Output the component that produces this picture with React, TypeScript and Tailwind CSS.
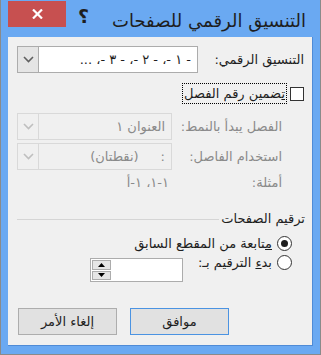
import React from "react";

const Chevron = ({ disabled }: { disabled?: boolean }) => (
  <svg width="11" height="7" viewBox="0 0 11 7">
    <polyline
      points="1,1 5.5,5.5 10,1"
      fill="none"
      stroke={disabled ? "#bfbfbf" : "#606060"}
      strokeWidth="1.6"
    />
  </svg>
);

function Combo({
  width,
  text,
  disabled,
}: {
  width: string;
  text: React.ReactNode;
  disabled?: boolean;
}) {
  return (
    <div
      className={`flex h-[27px] ${width} border ${
        disabled ? "border-[#d9d9d9] bg-[#f0f0f0] text-[#8a8a8a]" : "border-[#acacac] bg-white text-[#1e1e1e]"
      }`}
    >
      <div className="flex flex-1 items-center pr-[6px] whitespace-nowrap">{text}</div>
      <div
        className={`flex w-[21px] items-center justify-center border-r ${
          disabled ? "border-[#d9d9d9] bg-[#f0f0f0]" : "border-[#acacac] bg-[#e5e5e5]"
        }`}
      >
        <Chevron disabled={disabled} />
      </div>
    </div>
  );
}

function Radio({ checked }: { checked?: boolean }) {
  return (
    <div className="flex h-[15px] w-[15px] items-center justify-center rounded-full border border-[#333] bg-white">
      {checked && <div className="h-[7px] w-[7px] rounded-full bg-[#1e1e1e]" />}
    </div>
  );
}

export default function App() {
  return (
    <div className="h-[355px] w-[321px] border-x border-b border-[#8a8a8a] bg-[#6aa9f2] font-['DejaVu_Sans',sans-serif]">
      {/* title bar */}
      <div className="flex h-[37px] items-start">
        <div className="ml-[7px] mt-[1px] flex h-[26px] w-[58px] items-center justify-center bg-[#c75050]">
          <svg width="11" height="10" viewBox="0 0 11 10">
            <path d="M1 0.5 L10 9.5 M10 0.5 L1 9.5" stroke="#fff" strokeWidth="2.2" />
          </svg>
        </div>
        <div className="ml-[12px] mt-[4px] text-[19px] font-bold leading-[24px] text-[#1e1e1e]">؟</div>
        <div
          dir="rtl"
          className="min-w-0 flex-1 whitespace-nowrap pr-[14px] pt-[8px] text-[18px] leading-[26px] text-[#1e1e1e]"
        >
          التنسيق الرقمي للصفحات
        </div>
      </div>

      {/* body */}
      <div
        dir="rtl"
        className="mx-[7px] h-[309px] border-b border-r border-[#4f8bd6] bg-[#f0f0f0] pl-[9px] pr-[8px] pt-[9px] text-[13px] text-[#1e1e1e]"
      >
        <div className="flex h-[27px] items-center justify-between">
          <span>التنسيق الرقمي:</span>
          <Combo width="w-[181px]" text="- ١ -، - ٢ -، - ٣ -، ..." />
        </div>

        <div className="mt-[10px] flex h-[21px] items-center gap-[3px]">
          <div className="h-[14px] w-[14px] border border-[#333] bg-white" />
          <span className="border border-dotted border-black px-[1px] leading-[19px]">
            <span className="underline">ت</span>ضمين رقم الفصل
          </span>
        </div>

        <div className="mt-[9px] flex h-[27px] items-center justify-between text-[#8a8a8a]">
          <span className="pr-[22px]">الفصل يبدأ بالنمط:</span>
          <Combo width="w-[155px]" text="العنوان ١" disabled />
        </div>

        <div className="mt-[3px] flex h-[27px] items-center justify-between text-[#8a8a8a]">
          <span className="pr-[22px]">استخدام الفاصل:</span>
          <Combo
            width="w-[155px]"
            text={
              <span className="flex gap-[22px]">
                <span>:</span>
                <span>(نقطتان)</span>
              </span>
            }
            disabled
          />
        </div>

        <div className="mt-[5px] flex h-[16px] items-center justify-between text-[#8a8a8a]">
          <span className="pr-[22px]">أمثلة:</span>
          <span className="w-[155px] pr-[3px]">١-١، ١-أ</span>
        </div>

        <div className="mt-[19px] flex h-[18px] items-center gap-[2px]">
          <span className="-mr-[1px] whitespace-nowrap">ترقيم الصفحات</span>
          <div className="h-px flex-1 bg-[#d5d5d5]" />
        </div>

        <div className="mt-[6px] flex h-[19px] items-center gap-[5px] pr-[12px]">
          <Radio checked />
          <span>
            <span className="underline">م</span>تابعة من المقطع السابق
          </span>
        </div>

        <div className="flex items-start pr-[12px]">
          <div className="flex h-[19px] items-center gap-[5px]">
            <Radio />
            <span className="w-[88px] whitespace-nowrap">
              بد<span className="underline">ء</span> الترقيم بـ:
            </span>
          </div>
          <div className="mr-[1px] mt-[5px] flex h-[24px] w-[93px] border border-[#acacac] bg-white">
            <div className="flex-1" />
            <div className="ml-[1px] my-[1px] flex w-[19px] flex-col gap-[1px]">
              <div className="flex flex-1 items-center justify-center border border-[#acacac] bg-[#e5e5e5]">
                <svg width="7" height="4" viewBox="0 0 7 4">
                  <path d="M0 4 L3.5 0 L7 4 Z" fill="#000" />
                </svg>
              </div>
              <div className="flex flex-1 items-center justify-center border border-[#acacac] bg-[#e5e5e5]">
                <svg width="7" height="4" viewBox="0 0 7 4">
                  <path d="M0 0 L3.5 4 L7 0 Z" fill="#000" />
                </svg>
              </div>
            </div>
          </div>
        </div>

        <div className="mt-[26px] flex justify-end gap-[13px] pl-[1px]">
          <button className="h-[27px] w-[99px] border border-[#4b93e2] bg-[#e1e1e1] text-[13px] text-[#1e1e1e]">
            موافق
          </button>
          <button className="h-[27px] w-[99px] border border-[#adadad] bg-[#e1e1e1] text-[13px] text-[#1e1e1e]">
            إلغاء الأمر
          </button>
        </div>
      </div>
    </div>
  );
}
